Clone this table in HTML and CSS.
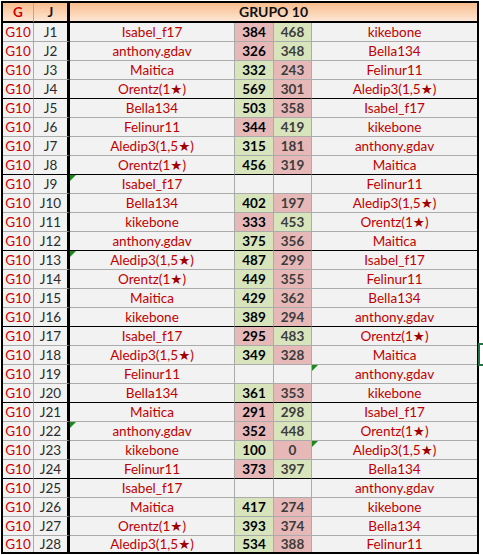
FILE: index.html
```html
<!DOCTYPE html>
<html>
<head>
<meta charset="utf-8">
<link rel="stylesheet" href="styles.css">
</head>
<body>
<div class="wrap">
<table class="sheet">
<colgroup>
<col class="c-g"><col class="c-j"><col class="c-name"><col class="c-s1"><col class="c-s2"><col class="c-name2">
</colgroup>
<tr class="hdr"><td class="g">G</td><td class="j">J</td><td class="title last" colspan="4">GRUPO 10</td></tr>
<tr><td class="g">G10</td><td class="j">J1</td><td class="n">Isabel_f17</td><td class="s1 r">384</td><td class="s2 gr">468</td><td class="n last">kikebone</td></tr>
<tr><td class="g">G10</td><td class="j">J2</td><td class="n">anthony.gdav</td><td class="s1 r">326</td><td class="s2 gr">348</td><td class="n last">Bella134</td></tr>
<tr><td class="g">G10</td><td class="j">J3</td><td class="n">Maitica</td><td class="s1 gr">332</td><td class="s2 r">243</td><td class="n last">Felinur11</td></tr>
<tr class="sep"><td class="g">G10</td><td class="j">J4</td><td class="n">Orentz(1<span class="star">★</span>)</td><td class="s1 gr">569</td><td class="s2 r">301</td><td class="n last">Aledip3(1,5<span class="star">★</span>)</td></tr>
<tr><td class="g">G10</td><td class="j">J5</td><td class="n">Bella134</td><td class="s1 gr">503</td><td class="s2 r">358</td><td class="n last">Isabel_f17</td></tr>
<tr><td class="g">G10</td><td class="j">J6</td><td class="n">Felinur11</td><td class="s1 r">344</td><td class="s2 gr">419</td><td class="n last">kikebone</td></tr>
<tr><td class="g">G10</td><td class="j">J7</td><td class="n">Aledip3(1,5<span class="star">★</span>)</td><td class="s1 gr">315</td><td class="s2 r">181</td><td class="n last">anthony.gdav</td></tr>
<tr class="sep"><td class="g">G10</td><td class="j">J8</td><td class="n">Orentz(1<span class="star">★</span>)</td><td class="s1 gr">456</td><td class="s2 r">319</td><td class="n last">Maitica</td></tr>
<tr><td class="g">G10</td><td class="j">J9</td><td class="n tri">Isabel_f17</td><td class="s1"></td><td class="s2"></td><td class="n last">Felinur11</td></tr>
<tr><td class="g">G10</td><td class="j">J10</td><td class="n">Bella134</td><td class="s1 gr">402</td><td class="s2 r">197</td><td class="n last">Aledip3(1,5<span class="star">★</span>)</td></tr>
<tr><td class="g">G10</td><td class="j">J11</td><td class="n">kikebone</td><td class="s1 r">333</td><td class="s2 gr">453</td><td class="n last">Orentz(1<span class="star">★</span>)</td></tr>
<tr class="sep"><td class="g">G10</td><td class="j">J12</td><td class="n">anthony.gdav</td><td class="s1 gr">375</td><td class="s2 r">356</td><td class="n last">Maitica</td></tr>
<tr><td class="g">G10</td><td class="j">J13</td><td class="n tri">Aledip3(1,5<span class="star">★</span>)</td><td class="s1 gr">487</td><td class="s2 r">299</td><td class="n last">Isabel_f17</td></tr>
<tr><td class="g">G10</td><td class="j">J14</td><td class="n">Orentz(1<span class="star">★</span>)</td><td class="s1 gr">449</td><td class="s2 r">355</td><td class="n last">Felinur11</td></tr>
<tr><td class="g">G10</td><td class="j">J15</td><td class="n">Maitica</td><td class="s1 gr">429</td><td class="s2 r">362</td><td class="n last">Bella134</td></tr>
<tr class="sep"><td class="g">G10</td><td class="j">J16</td><td class="n">kikebone</td><td class="s1 gr">389</td><td class="s2 r">294</td><td class="n last">anthony.gdav</td></tr>
<tr><td class="g">G10</td><td class="j">J17</td><td class="n">Isabel_f17</td><td class="s1 r">295</td><td class="s2 gr">483</td><td class="n last">Orentz(1<span class="star">★</span>)</td></tr>
<tr><td class="g">G10</td><td class="j">J18</td><td class="n">Aledip3(1,5<span class="star">★</span>)</td><td class="s1 gr">349</td><td class="s2 r">328</td><td class="n last">Maitica</td></tr>
<tr><td class="g">G10</td><td class="j">J19</td><td class="n">Felinur11</td><td class="s1"></td><td class="s2"></td><td class="n last tri">anthony.gdav</td></tr>
<tr class="sep"><td class="g">G10</td><td class="j">J20</td><td class="n">Bella134</td><td class="s1 gr">361</td><td class="s2 r">353</td><td class="n last">kikebone</td></tr>
<tr><td class="g">G10</td><td class="j">J21</td><td class="n">Maitica</td><td class="s1 r">291</td><td class="s2 gr">298</td><td class="n last">Isabel_f17</td></tr>
<tr><td class="g">G10</td><td class="j">J22</td><td class="n tri">anthony.gdav</td><td class="s1 r">352</td><td class="s2 gr">448</td><td class="n last">Orentz(1<span class="star">★</span>)</td></tr>
<tr><td class="g">G10</td><td class="j">J23</td><td class="n">kikebone</td><td class="s1 gr">100</td><td class="s2 r">0</td><td class="n last tri">Aledip3(1,5<span class="star">★</span>)</td></tr>
<tr class="sep"><td class="g">G10</td><td class="j">J24</td><td class="n">Felinur11</td><td class="s1 r">373</td><td class="s2 gr">397</td><td class="n last">Bella134</td></tr>
<tr><td class="g">G10</td><td class="j">J25</td><td class="n">Isabel_f17</td><td class="s1"></td><td class="s2"></td><td class="n last">anthony.gdav</td></tr>
<tr><td class="g">G10</td><td class="j">J26</td><td class="n">Maitica</td><td class="s1 gr">417</td><td class="s2 r">274</td><td class="n last">kikebone</td></tr>
<tr><td class="g">G10</td><td class="j">J27</td><td class="n">Orentz(1<span class="star">★</span>)</td><td class="s1 gr">393</td><td class="s2 r">374</td><td class="n last">Bella134</td></tr>
<tr class="end"><td class="g">G10</td><td class="j">J28</td><td class="n">Aledip3(1,5<span class="star">★</span>)</td><td class="s1 gr">534</td><td class="s2 r">388</td><td class="n last">Felinur11</td></tr>
</table>
<div class="sel"></div>
</div>
</body>
</html>
```
FILE: styles.css
```css
html, body {
  margin: 0;
  padding: 0;
  background: #ffffff;
  overflow: hidden;
}
.wrap {
  position: relative;
  padding: 1px 0 0 1px;
  width: 482px;
  height: 554px;
}
.sheet {
  border-collapse: separate;
  border-spacing: 0;
  table-layout: fixed;
  width: 478px;
  border: 2px solid #000;
  font-family: Lato, "Liberation Sans", sans-serif;
  font-size: 13.5px;
}
.c-g { width: 31px; }
.c-j { width: 36px; }
.c-name { width: 165px; }
.c-s1 { width: 39px; }
.c-s2 { width: 38px; }
.c-name2 { width: 165px; }
.sheet td {
  padding: 0;
  height: 18px;
  line-height: 18px;
  border-right: 1px solid #ababab;
  border-bottom: 1px solid #ababab;
  background: #f2f2f2;
  text-align: center;
  white-space: nowrap;
  overflow: hidden;
  color: #c00000;
}
.sheet td.last { border-right: none; }
.sheet td.j {
  border-right: 3px solid #000;
  color: #2b2b2b;
}
.sheet td.g { color: #d00000; }
.sheet tr.sep td { border-bottom-color: #000; }
.sheet tr.end td { border-bottom: none; height: 16px; line-height: 16px; }
.sheet tr.hdr td {
  background: linear-gradient(#f8bd8e, #fde6d3);
  border-bottom: 2px solid #000;
  font-weight: bold;
  height: 18px;
}
.sheet tr.hdr td.j { color: #1a1a1a; }
.sheet tr.hdr td.title { color: #111; font-size: 14px; }
.sheet td.s1, .sheet td.s2 { font-weight: bold; }
.sheet td.s1 { color: #000; }
.sheet td.s2 { color: #3c3c3c; }
.sheet td.r { background: #e6b8b7; }
.sheet td.gr { background: #d8e4bc; }
.star {
  font-family: "DejaVu Sans", sans-serif;
  font-size: 13.5px;
  line-height: 0;
  color: #a00000;
}
.sheet td.tri { position: relative; }
.sheet td.tri::before {
  content: "";
  position: absolute;
  left: 0;
  top: 0;
  border-top: 6px solid #1b8a1b;
  border-right: 6px solid transparent;
}
.sel {
  position: absolute;
  left: 478px;
  top: 343px;
  width: 20px;
  height: 19px;
  border: 2px solid #217346;
}
```
